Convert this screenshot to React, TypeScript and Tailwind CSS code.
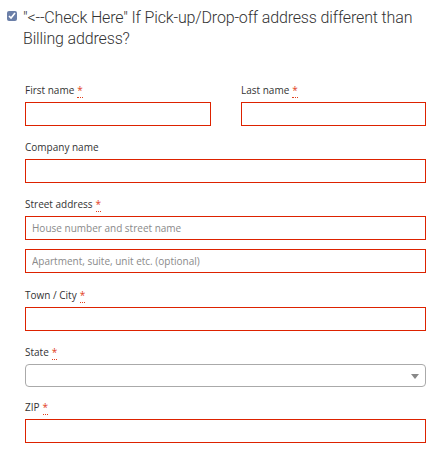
import React from 'react';

const Req = () => (
  <abbr title="required" className="ml-[3px] text-[#e2401c] no-underline border-b border-dotted border-[#e2401c] leading-none">
    *
  </abbr>
);

const Label = ({ text, req }: { text: string; req?: boolean }) => (
  <label className="block text-[10px] leading-[14px] text-[#333] mb-[5px]">
    {text}
    {req && <Req />}
  </label>
);

const Input = ({ placeholder }: { placeholder?: string }) => (
  <input
    type="text"
    placeholder={placeholder}
    className="block w-full h-[24px] border border-[#dd2200] bg-white px-[6px] text-[10px] text-[#333] placeholder:text-[#8a8a8a] outline-none"
  />
);

export default function App() {
  return (
    <div className="w-[442px] h-[460px] bg-white" style={{ fontFamily: '"Open Sans", "Liberation Sans", sans-serif' }}>
      <div className="flex items-start pl-[7px] pt-[7px] pr-[4px]">
        <input type="checkbox" defaultChecked className="w-[10px] h-[10px] mt-[4px] mr-[6px] shrink-0 accent-[#6b7fa8]" />
        <p className="text-[16px] leading-[21px] tracking-[-0.15px] font-light text-[#333]" style={{ fontFamily: 'Roboto, "Liberation Sans", sans-serif' }}>
          "&lt;--Check Here" If Pick-up/Drop-off address different than Billing address?
        </p>
      </div>

      <div className="ml-[25px] w-[401px] mt-[34px]">
        <div className="flex gap-[30px]">
          <div className="w-[186px]">
            <Label text="First name" req />
            <Input />
          </div>
          <div className="flex-1">
            <Label text="Last name" req />
            <Input />
          </div>
        </div>

        <div className="mt-[14px]">
          <Label text="Company name" />
          <Input />
        </div>

        <div className="mt-[14px]">
          <Label text="Street address" req />
          <Input placeholder="House number and street name" />
          <div className="mt-[9px]">
            <Input placeholder="Apartment, suite, unit etc. (optional)" />
          </div>
        </div>

        <div className="mt-[15px]">
          <Label text="Town / City" req />
          <Input />
        </div>

        <div className="mt-[14px]">
          <Label text="State" req />
          <div className="relative h-[23px] border border-[#aaa] rounded-[4px] bg-white">
            <span className="absolute right-[6px] top-[9px] w-0 h-0 border-l-[4px] border-r-[4px] border-t-[5px] border-l-transparent border-r-transparent border-t-[#888]" />
          </div>
        </div>

        <div className="mt-[13px]">
          <Label text="ZIP" req />
          <Input />
        </div>
      </div>
    </div>
  );
}
